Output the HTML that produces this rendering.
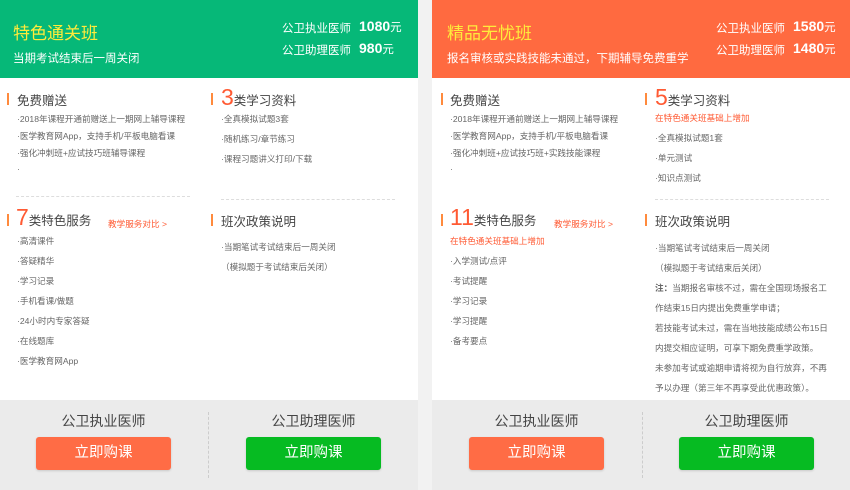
<!DOCTYPE html>
<html><head><meta charset="utf-8"><style>
*{margin:0;padding:0;box-sizing:border-box}
body{width:850px;height:490px;background:#f2f2f2;font-family:"Liberation Sans","Noto Sans CJK SC",sans-serif;position:relative;overflow:hidden;color:#555}
.card{position:absolute;top:0;width:418px;height:490px;background:#fff}
.hd{position:absolute;left:0;top:0;width:418px;height:78px}
.a{position:absolute;white-space:nowrap}
.t{font-size:17px;color:#ffeb3b}
.sub{font-size:11.5px;color:#fff}
.pl{font-size:11.5px;color:#fff}
.pv{font-size:14px;font-weight:bold;color:#fff}
.pv small{font-size:11.5px;font-weight:normal}
.bar{position:absolute;width:2px;height:12px;background:#ff8a3d}
.h{font-size:12.5px;color:#444}
.big{font-size:23px;color:#ff5a33;font-weight:normal}
.it{font-size:8.6px;color:#666}
.red{font-size:8.6px;color:#ff5a33}
.dash{position:absolute;height:0;border-top:1px dashed #ddd}
.ft{position:absolute;left:0;top:400px;width:418px;height:90px;background:#ebebeb}
.fl{font-size:14px;color:#444;text-align:center;width:135px}
.btn{position:absolute;width:135px;height:33px;border-radius:3px;color:#fff;font-size:14.5px;text-align:center;line-height:33px;box-shadow:0 1px 2px rgba(0,0,0,.15)}
.vd{position:absolute;left:208px;top:412px;height:66px;border-left:1px dashed #ccc}
</style></head><body>

<div class="card" style="left:0">
 <div class="hd" style="background:#06b878"></div>
 <div class="a t" style="left:13px;top:19px">特色通关班</div>
 <div class="a sub" style="left:13px;top:50px">当期考试结束后一周关闭</div>
 <div class="a pl" style="left:282px;top:20px">公卫执业医师</div>
 <div class="a pv" style="left:359px;top:18px">1080<small>元</small></div>
 <div class="a pl" style="left:282px;top:42px">公卫助理医师</div>
 <div class="a pv" style="left:359px;top:40px">980<small>元</small></div>

 <div class="bar" style="left:7px;top:93px"></div>
 <div class="a h" style="left:17px;top:90px">免费赠送</div>
 <div class="a it" style="left:17px;top:113px">·2018年课程开通前赠送上一期网上辅导课程</div>
 <div class="a it" style="left:17px;top:130px">·医学教育网App，支持手机/平板电脑看课</div>
 <div class="a it" style="left:17px;top:147px">·强化冲刺班+应试技巧班辅导课程</div>
 <div class="a it" style="left:17px;top:164px">·</div>
 <div class="dash" style="left:16px;top:196px;width:174px"></div>

 <div class="bar" style="left:211px;top:93px"></div>
 <div class="a" style="left:221px;top:84px"><span class="big">3</span><span class="h">类学习资料</span></div>
 <div class="a it" style="left:221px;top:113px">·全真模拟试题3套</div>
 <div class="a it" style="left:221px;top:133px">·随机练习/章节练习</div>
 <div class="a it" style="left:221px;top:153px">·课程习题讲义打印/下载</div>
 <div class="dash" style="left:221px;top:199px;width:174px"></div>

 <div class="bar" style="left:7px;top:214px"></div>
 <div class="a" style="left:16px;top:204px"><span class="big">7</span><span class="h">类特色服务</span></div>
 <div class="a red" style="left:108px;top:218px">教学服务对比 &gt;</div>
 <div class="a it" style="left:17px;top:235px">·高清课件</div>
 <div class="a it" style="left:17px;top:255px">·答疑精华</div>
 <div class="a it" style="left:17px;top:275px">·学习记录</div>
 <div class="a it" style="left:17px;top:295px">·手机看课/做题</div>
 <div class="a it" style="left:17px;top:315px">·24小时内专家答疑</div>
 <div class="a it" style="left:17px;top:335px">·在线题库</div>
 <div class="a it" style="left:17px;top:355px">·医学教育网App</div>

 <div class="bar" style="left:211px;top:214px"></div>
 <div class="a h" style="left:221px;top:211px">班次政策说明</div>
 <div class="a it" style="left:221px;top:241px">·当期笔试考试结束后一周关闭</div>
 <div class="a it" style="left:221px;top:261px">（模拟题于考试结束后关闭）</div>

 <div class="ft"></div>
 <div class="a fl" style="left:36px;top:411px">公卫执业医师</div>
 <div class="btn" style="left:36px;top:437px;background:#ff6c45">立即购课</div>
 <div class="vd"></div>
 <div class="a fl" style="left:246px;top:411px">公卫助理医师</div>
 <div class="btn" style="left:246px;top:437px;background:#06bb22">立即购课</div>
</div>

<div class="card" style="left:432px">
 <div class="hd" style="background:#ff6a40"></div>
 <div class="a t" style="left:15px;top:19px">精品无忧班</div>
 <div class="a sub" style="left:15px;top:50px">报名审核或实践技能未通过，下期辅导免费重学</div>
 <div class="a pl" style="left:284px;top:20px">公卫执业医师</div>
 <div class="a pv" style="left:361px;top:18px">1580<small>元</small></div>
 <div class="a pl" style="left:284px;top:42px">公卫助理医师</div>
 <div class="a pv" style="left:361px;top:40px">1480<small>元</small></div>

 <div class="bar" style="left:9px;top:93px"></div>
 <div class="a h" style="left:18px;top:90px">免费赠送</div>
 <div class="a it" style="left:18px;top:113px">·2018年课程开通前赠送上一期网上辅导课程</div>
 <div class="a it" style="left:18px;top:130px">·医学教育网App，支持手机/平板电脑看课</div>
 <div class="a it" style="left:18px;top:147px">·强化冲刺班+应试技巧班+实践技能课程</div>
 <div class="a it" style="left:18px;top:164px">·</div>

 <div class="bar" style="left:213px;top:93px"></div>
 <div class="a" style="left:223px;top:84px"><span class="big">5</span><span class="h">类学习资料</span></div>
 <div class="a red" style="left:223px;top:112px">在特色通关班基础上增加</div>
 <div class="a it" style="left:223px;top:132px">·全真模拟试题1套</div>
 <div class="a it" style="left:223px;top:152px">·单元测试</div>
 <div class="a it" style="left:223px;top:172px">·知识点测试</div>
 <div class="dash" style="left:223px;top:199px;width:174px"></div>

 <div class="bar" style="left:9px;top:214px"></div>
 <div class="a" style="left:18px;top:204px"><span class="big">11</span><span class="h">类特色服务</span></div>
 <div class="a red" style="left:122px;top:218px">教学服务对比 &gt;</div>
 <div class="a red" style="left:18px;top:235px">在特色通关班基础上增加</div>
 <div class="a it" style="left:18px;top:255px">·入学测试/点评</div>
 <div class="a it" style="left:18px;top:275px">·考试提醒</div>
 <div class="a it" style="left:18px;top:295px">·学习记录</div>
 <div class="a it" style="left:18px;top:315px">·学习提醒</div>
 <div class="a it" style="left:18px;top:335px">·备考要点</div>

 <div class="bar" style="left:213px;top:214px"></div>
 <div class="a h" style="left:223px;top:211px">班次政策说明</div>
 <div class="a it" style="left:223px;top:242px">·当期笔试考试结束后一周关闭</div>
 <div class="a it" style="left:223px;top:262px">（模拟题于考试结束后关闭）</div>
 <div class="a it" style="left:223px;top:282px"><b>注：</b>当期报名审核不过，需在全国现场报名工</div>
 <div class="a it" style="left:223px;top:302px">作结束15日内提出免费重学申请；</div>
 <div class="a it" style="left:223px;top:322px">若技能考试未过，需在当地技能成绩公布15日</div>
 <div class="a it" style="left:223px;top:342px">内提交相应证明，可享下期免费重学政策。</div>
 <div class="a it" style="left:223px;top:362px">未参加考试或逾期申请将视为自行放弃，不再</div>
 <div class="a it" style="left:223px;top:382px">予以办理（第三年不再享受此优惠政策）。</div>

 <div class="ft"></div>
 <div class="a fl" style="left:37px;top:411px">公卫执业医师</div>
 <div class="btn" style="left:37px;top:437px;background:#ff6c45">立即购课</div>
 <div class="vd" style="left:210px"></div>
 <div class="a fl" style="left:247px;top:411px">公卫助理医师</div>
 <div class="btn" style="left:247px;top:437px;background:#06bb22">立即购课</div>
</div>
</body></html>
